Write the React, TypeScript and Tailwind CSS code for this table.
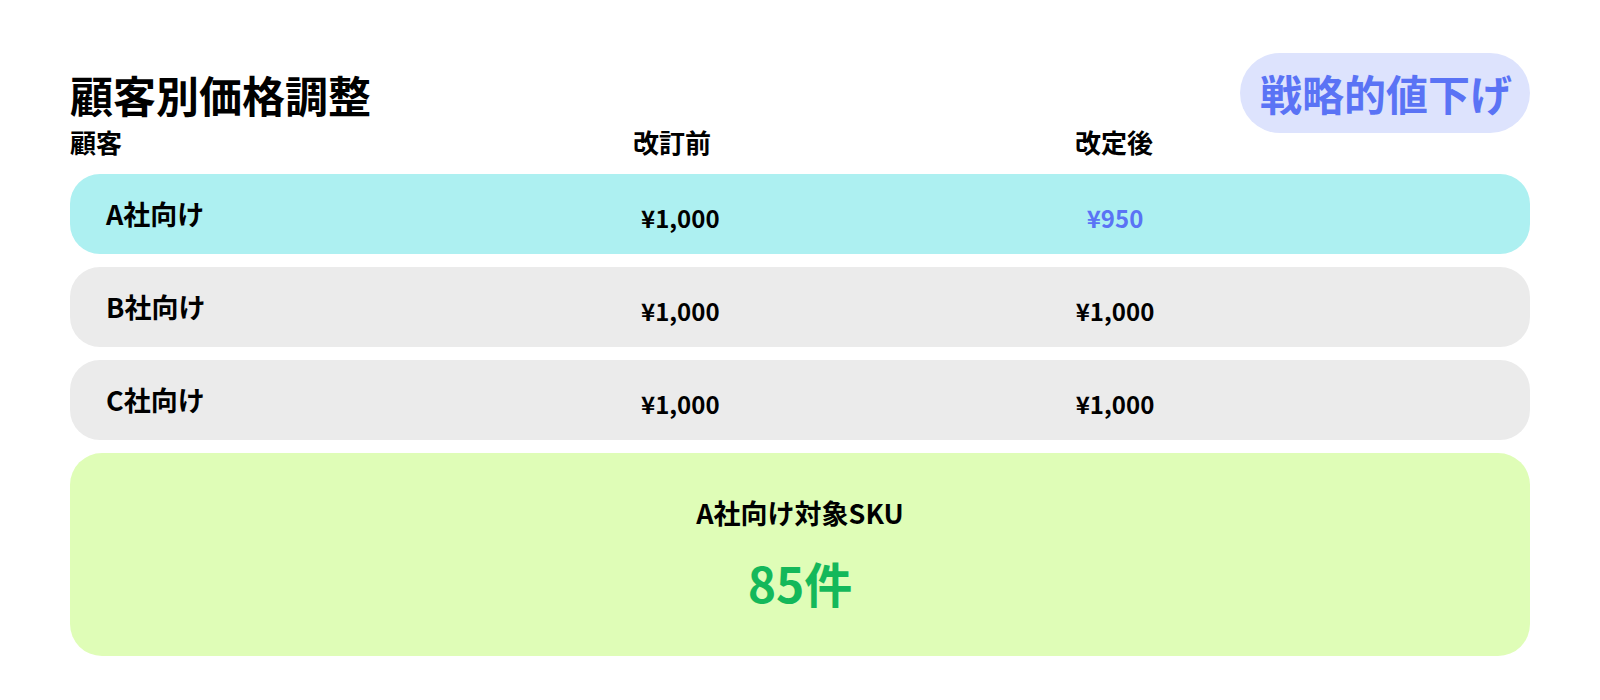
const FONT = "font-['Noto_Sans_CJK_JP','Noto_Sans',sans-serif]";

type Row = {
  name: string;
  before: string;
  after: string;
  highlight?: boolean;
};

const ROWS: Row[] = [
  { name: 'A社向け', before: '¥1,000', after: '¥950', highlight: true },
  { name: 'B社向け', before: '¥1,000', after: '¥1,000' },
  { name: 'C社向け', before: '¥1,000', after: '¥1,000' },
];

export default function App() {
  return (
    <div className={`${FONT} min-h-[700px] w-[1600px] bg-white text-black`}>
      <div className="px-[70px] pt-[53px]">
        {/* ── Title + badge ── */}
        <div className="flex h-[80px] items-center justify-between">
          <h1 className="mt-[2px] text-[43px] font-bold leading-[50px]">顧客別価格調整</h1>
          <div className="flex h-[80px] w-[290px] items-center justify-center rounded-full bg-[#dde3fd]">
            <span className="ml-[2px] text-[42px] font-bold leading-[52px] text-[#5a73f5]">戦略的値下げ</span>
          </div>
        </div>

        {/* ── Column headers ── */}
        <div className="-mt-[6px] flex text-[26px] font-bold leading-[30px]">
          <div className="w-[563px]">顧客</div>
          <div className="w-[442px]">改訂前</div>
          <div>改定後</div>
        </div>

        {/* ── Rows ── */}
        <div className="mt-[17px] flex flex-col gap-[13px]">
          {ROWS.map((row) => (
            <div
              key={row.name}
              className={`flex h-[80px] items-center rounded-[30px] pl-[36px] font-bold leading-[30px] ${
                row.highlight ? 'bg-[#adf0f1]' : 'bg-[#ebebeb]'
              }`}
            >
              <div className="w-[535px] text-[27px]">{row.name}</div>
              <div className="mt-[8px] w-[400px] text-[24px]">{row.before}</div>
              <div
                className={`mt-[8px] w-[148px] text-center text-[24px] ${
                  row.highlight ? 'text-[#5a73f5]' : ''
                }`}
              >
                {row.after}
              </div>
            </div>
          ))}

          {/* ── Summary ── */}
          <div className="flex h-[203px] flex-col items-center rounded-[32px] bg-[#dffdb7] pt-[44px]">
            <div className="text-[27px] font-bold leading-[32px]">A社向け対象SKU</div>
            <div className="mt-[25px] text-[48px] font-bold leading-[56px] text-[#14b85a]">85件</div>
          </div>
        </div>
      </div>
    </div>
  );
}
